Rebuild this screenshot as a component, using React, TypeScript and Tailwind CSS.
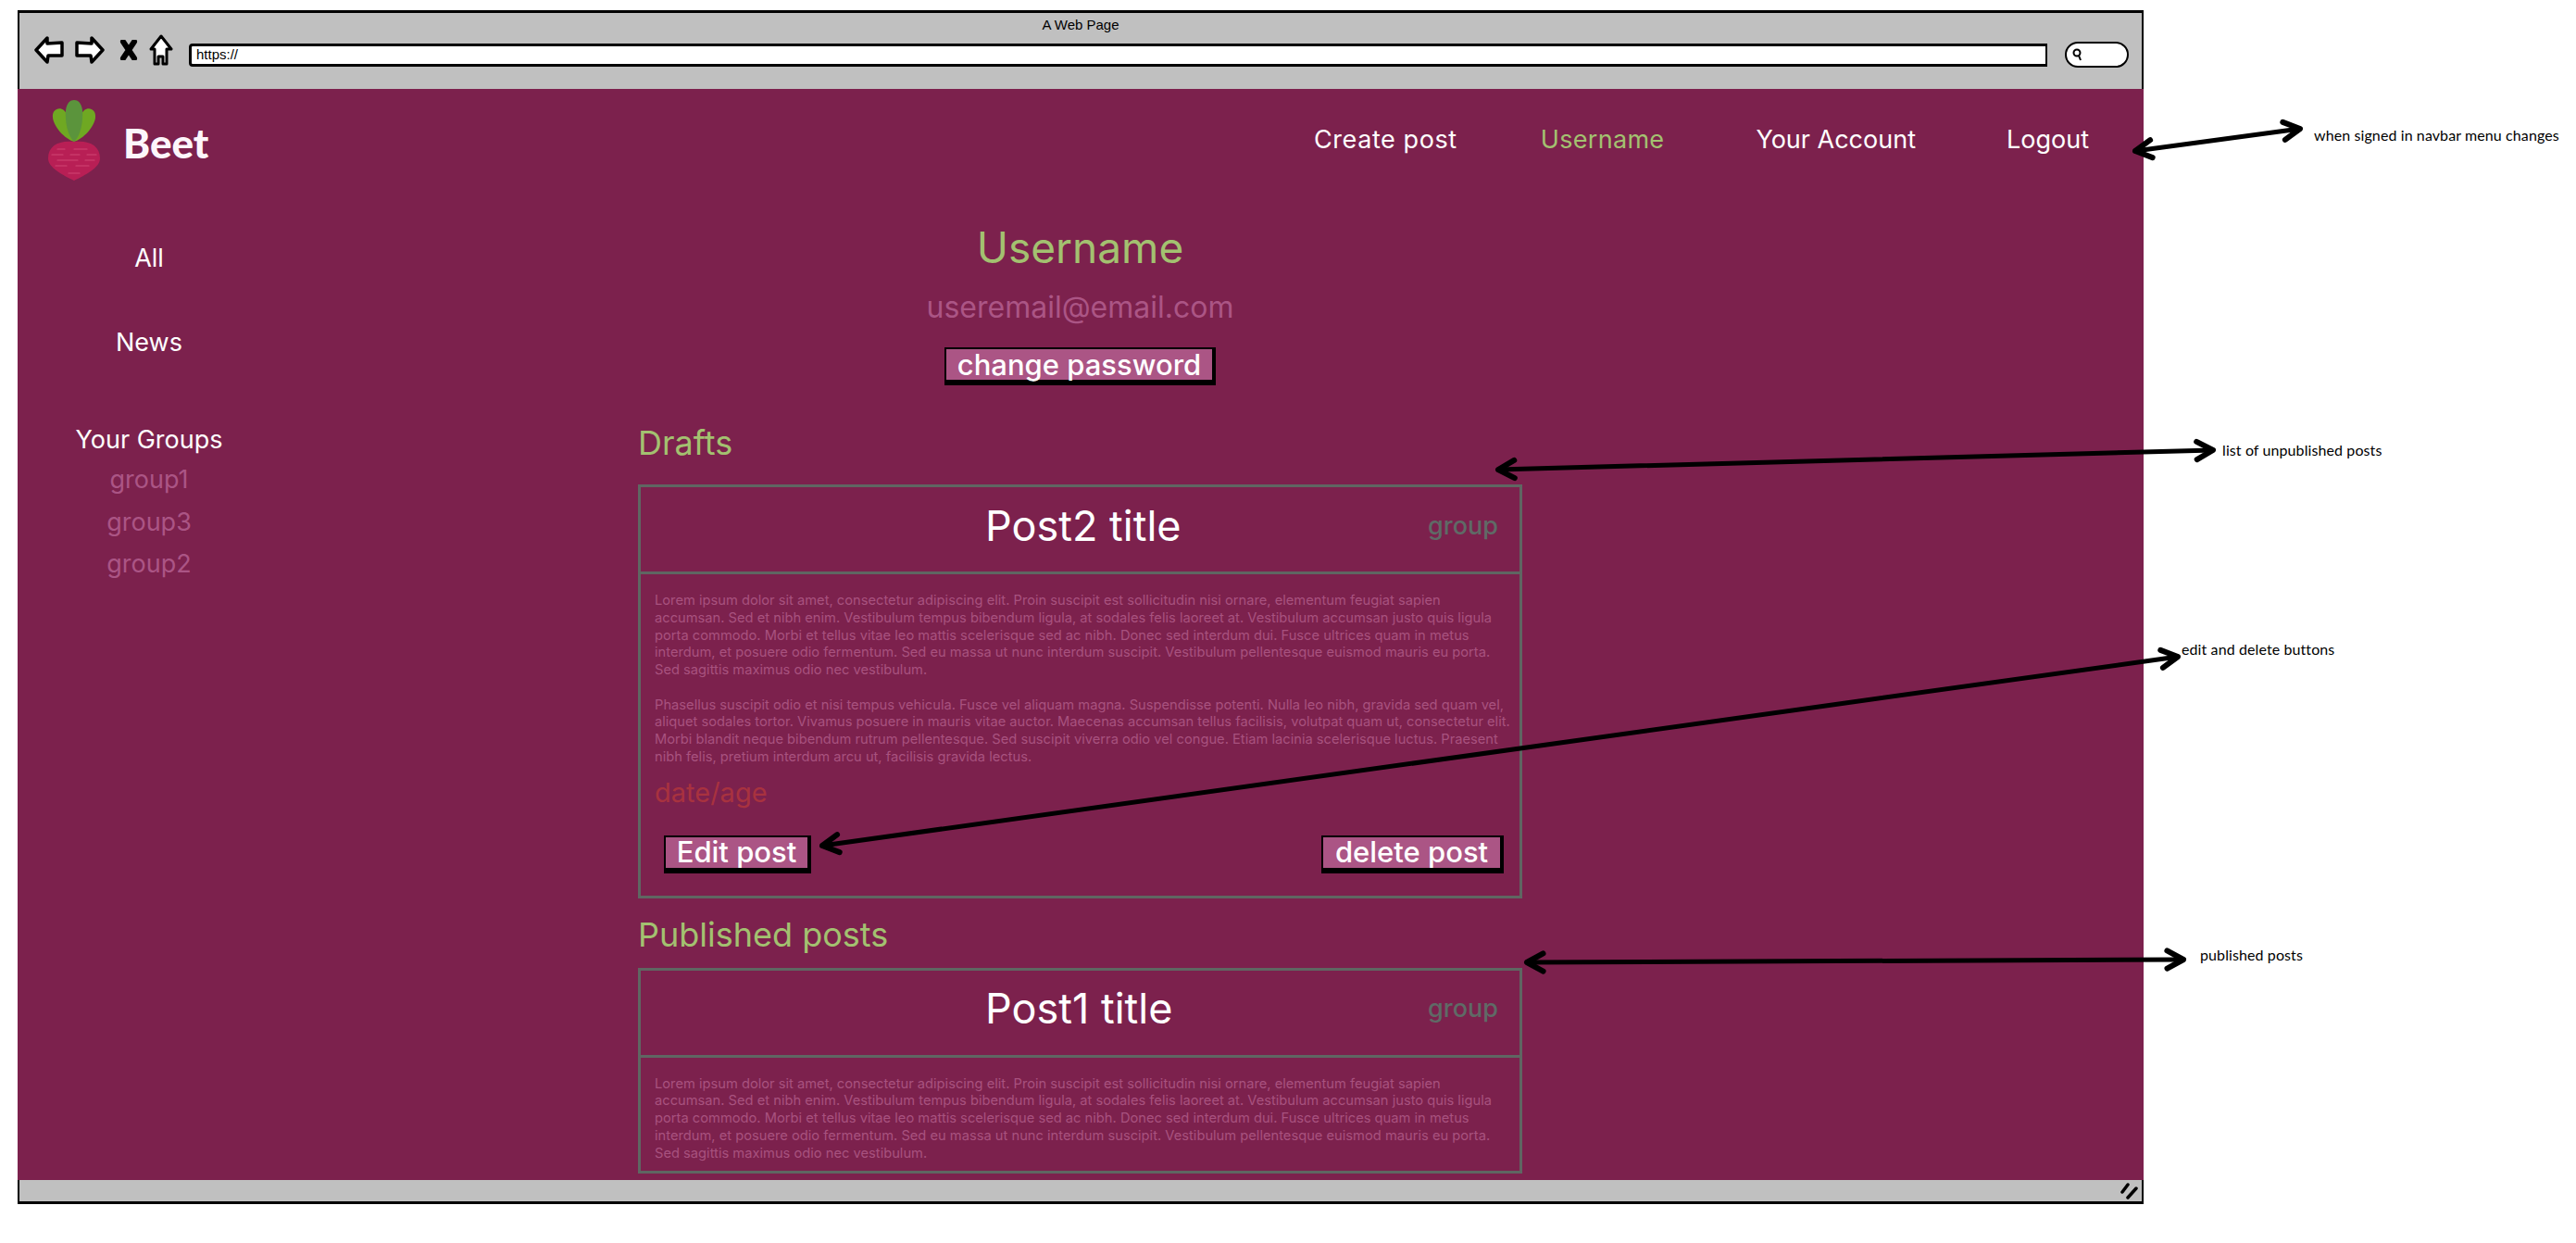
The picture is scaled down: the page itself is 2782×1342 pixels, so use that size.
const LINES_A = [
  "Lorem ipsum dolor sit amet, consectetur adipiscing elit. Proin suscipit est sollicitudin nisi ornare, elementum feugiat sapien",
  "accumsan. Sed et nibh enim. Vestibulum tempus bibendum ligula, at sodales felis laoreet at. Vestibulum accumsan justo quis ligula",
  "porta commodo. Morbi et tellus vitae leo mattis scelerisque sed ac nibh. Donec sed interdum dui. Fusce ultrices quam in metus",
  "interdum, et posuere odio fermentum. Sed eu massa ut nunc interdum suscipit. Vestibulum pellentesque euismod mauris eu porta.",
  "Sed sagittis maximus odio nec vestibulum.",
];
const LINES_B = [
  "Phasellus suscipit odio et nisi tempus vehicula. Fusce vel aliquam magna. Suspendisse potenti. Nulla leo nibh, gravida sed quam vel,",
  "aliquet sodales tortor. Vivamus posuere in mauris vitae auctor. Maecenas accumsan tellus facilisis, volutpat quam ut, consectetur elit.",
  "Morbi blandit neque bibendum rutrum pellentesque. Sed suscipit viverra odio vel congue. Etiam lacinia scelerisque luctus. Praesent",
  "nibh felis, pretium interdum arcu ut, facilisis gravida lectus.",
];

function Lines({ lines }: { lines: string[] }) {
  return (
    <p className="text-[14.7px] leading-[18.75px] text-[#a8527f] whitespace-nowrap">
      {lines.map((l) => (
        <span key={l} className="block">{l}</span>
      ))}
    </p>
  );
}

function SketchButton({ label, w }: { label: string; w: string }) {
  return (
    <button className={`${w} h-[41px] bg-[#ab5585] border-t-2 border-l-2 border-r-[4px] border-b-[6px] border-black text-white font-medium text-[31px] leading-[30px] flex items-center justify-center whitespace-nowrap`}>
      {label}
    </button>
  );
}

function CardHeader({ title }: { title: string }) {
  return (
    <div className="h-[94px] border-b-[3px] border-[#5f6662] flex items-center justify-between pl-[372px] pr-[23px] pb-[8px]">
      <span className="text-white text-[45px] leading-[56px]">{title}</span>
      <span className="text-[#5f6a66] font-medium text-[27px] leading-[36px]">group</span>
    </div>
  );
}

function Arrow({ x1, y1, x2, y2 }: { x1: number; y1: number; x2: number; y2: number }) {
  const a = Math.atan2(y1 - y2, x1 - x2);
  const head = (x: number, y: number, ang: number) => {
    const l = 20;
    const s = 0.5;
    return `M${x + l * Math.cos(ang + s)} ${y + l * Math.sin(ang + s)} L${x} ${y} L${x + l * Math.cos(ang - s)} ${y + l * Math.sin(ang - s)}`;
  };
  return (
    <g stroke="#000" fill="none" strokeLinecap="round" strokeLinejoin="round">
      <path d={`M${x1} ${y1} L${x2} ${y2}`} strokeWidth="5" />
      <path d={head(x1, y1, a + Math.PI)} strokeWidth="6" />
      <path d={head(x2, y2, a)} strokeWidth="6" />
    </g>
  );
}

function Note({ className, children }: { className: string; children: string }) {
  return (
    <span className={`absolute font-['Lato',sans-serif] text-black text-[16px] tracking-[0.1px] leading-[20px] whitespace-nowrap ${className}`}>{children}</span>
  );
}

function BeetLogo() {
  return (
    <svg width="60" height="88" viewBox="0 0 60 88" className="shrink-0">
      <path d="M30 46 C20 43 8 30 7 20 C6 11 14 8 19 12 C24 16 27 32 30 46Z" fill="#6fa822" />
      <path d="M30 46 C40 43 52 30 53 20 C54 11 46 8 41 12 C36 16 33 32 30 46Z" fill="#6fa822" />
      <path d="M30 46 C23 40 20 24 21 12 C22 4 26 1 30 1 C34 1 38 4 39 12 C40 24 37 40 30 46Z" fill="#5b943c" />
      <path d="M30 46 C46 44 58 50 58 64 C58 74 42 82 30 88 C18 82 2 74 2 64 C2 50 14 44 30 46Z" fill="#b81f55" />
      <g stroke="#cf4775" strokeWidth="1.2" strokeLinecap="round">
        <path d="M12 54 H20 M30 54 H44" />
        <path d="M6 60 H18 M26 60 H36 M44 60 H54" />
        <path d="M12 66 H34 M42 66 H52" />
        <path d="M10 72 H22 M32 72 H46" />
        <path d="M24 80 H36" />
      </g>
    </svg>
  );
}

function ChromeIcons() {
  return (
    <div className="flex items-center mb-[10px]">
      <svg width="32" height="30" viewBox="0 0 32 30">
        <path d="M2 15 L14 2 L14 8 L30 7 L30 21 L15 21 L14 28Z" fill="#fff" stroke="#000" strokeWidth="3.5" strokeLinejoin="round" />
      </svg>
      <svg width="32" height="30" viewBox="0 0 32 30" className="ml-[12px]">
        <path d="M30 15 L18 2 L18 8 L2 7 L2 21 L17 21 L18 28Z" fill="#fff" stroke="#000" strokeWidth="3.5" strokeLinejoin="round" />
      </svg>
      <svg width="20" height="22" viewBox="0 0 20 22" className="ml-[16px]">
        <path d="M4 2 L16 20 M16 2 L4 20" stroke="#000" strokeWidth="6" strokeLinecap="round" />
      </svg>
      <svg width="26" height="34" viewBox="0 0 26 34" className="ml-[12px]">
        <path d="M13 2 L24 16 L19 16 L19 32 L15 32 L15 24 L10 24 L10 32 L6 32 L6 16 L2 16Z" fill="#fff" stroke="#000" strokeWidth="3" strokeLinejoin="round" />
      </svg>
    </div>
  );
}

export default function App() {
  return (
    <div className="relative w-[2782px] h-[1342px] overflow-hidden bg-white font-['Inter',sans-serif]">
      <div className="w-[2296px] ml-[19px] pt-[11px]">
        {/* Browser chrome */}
        <div className="h-[85px] bg-[#c0c0c0] border-t-[3px] border-x-2 border-black">
          <div className="h-[26px] flex items-center justify-center font-['Liberation_Sans',sans-serif] text-[15px] text-black">A Web Page</div>
          <div className="h-[38px] flex items-center pl-[16px]">
            <ChromeIcons />
            <div className="ml-[17px] w-[2007px] h-[25px] bg-white border-y-[3px] border-l-[3px] border-r-2 border-black rounded-l-[4px] flex items-center pl-[5px] font-['Liberation_Sans',sans-serif] text-[15px] text-black">https://</div>
            <div className="ml-[19px] w-[69px] h-[28px] bg-white border-2 border-black rounded-[14px] flex items-center pl-[5px]">
              <svg width="12" height="14" viewBox="0 0 12 14">
                <circle cx="6" cy="5" r="3.5" fill="none" stroke="#000" strokeWidth="2" />
                <path d="M8 8 L10 13" stroke="#000" strokeWidth="2" />
              </svg>
            </div>
          </div>
        </div>

        {/* Page */}
        <div className="h-[1178px] bg-[#7c214d] overflow-hidden">
          <header className="h-[143px] flex justify-between">
            <div className="flex items-start pl-[31px] pt-[11px]">
              <BeetLogo />
              <span className="ml-[23px] mt-[19px] font-['Lato',sans-serif] font-black text-[#fdf6fb] text-[44px] leading-[56px]">Beet</span>
            </div>
            <nav className="flex text-[27px] leading-[36px] pt-[37px] text-white whitespace-nowrap">
              <a className="mr-[90px] tracking-[0.6px]">Create post</a>
              <a className="mr-[99px] tracking-[0.3px] text-[#a3c170]">Username</a>
              <a className="mr-[98px]">Your Account</a>
              <a className="mr-[59px]">Logout</a>
            </nav>
          </header>

          <div className="flex">
            <aside className="w-[284px] flex flex-col items-center pt-[22px] text-[27px] leading-[36px] text-white shrink-0">
              <a>All</a>
              <a className="mt-[55px]">News</a>
              <h3 className="mt-[69px]">Your Groups</h3>
              <a className="mt-[2px] leading-[45.5px] text-[#ab5585]">group1</a>
              <a className="leading-[45.5px] text-[#ab5585]">group3</a>
              <a className="leading-[45.5px] text-[#ab5585]">group2</a>
            </aside>

            <main className="ml-[386px] w-[955px]">
              <div className="flex flex-col items-center">
                <h1 className="text-[#a3c170] text-[46px] leading-[56px]">Username</h1>
                <p className="mt-[17px] text-[#ab5585] text-[32px] leading-[40px]">useremail@email.com</p>
                <div className="mt-[23px]">
                  <SketchButton label="change password" w="w-[293px]" />
                </div>
              </div>

              <h2 className="mt-[40px] text-[#a3c170] text-[36px] leading-[44px]">Drafts</h2>
              <section className="mt-[23px] border-[3px] border-[#5f6662]">
                <CardHeader title="Post2 title" />
                <div className="pl-[15px] pr-[15px] pt-[19px] pb-[24px]">
                  <Lines lines={LINES_A} />
                  <div className="h-[18.75px]" />
                  <Lines lines={LINES_B} />
                  <p className="mt-[9px] text-[#a8323f] text-[29px] leading-[40px]">date/age</p>
                  <div className="mt-[26px] pl-[10px] pr-[2px] flex justify-between">
                    <SketchButton label="Edit post" w="w-[159px]" />
                    <SketchButton label="delete post" w="w-[197px]" />
                  </div>
                </div>
              </section>

              <h2 className="mt-[17px] text-[#a3c170] text-[36px] leading-[44px]">Published posts</h2>
              <section className="mt-[14px] border-[3px] border-[#5f6662]">
                <CardHeader title="Post1 title" />
                <div className="pl-[15px] pr-[15px] pt-[19px] pb-[10px]">
                  <Lines lines={LINES_A} />
                </div>
              </section>
            </main>
          </div>
        </div>

        {/* Status bar */}
        <div className="h-[26px] bg-[#c0c0c0] border-b-[3px] border-x-2 border-black flex items-center justify-end pr-[3px]">
          <svg width="20" height="18" viewBox="0 0 20 18">
            <path d="M2 10 L8 2 M8 16 L17 6" stroke="#000" strokeWidth="3.5" strokeLinecap="round" />
          </svg>
        </div>
      </div>

      {/* Annotations */}
      <svg width="2782" height="1342" viewBox="0 0 2782 1342" className="absolute left-0 top-0 pointer-events-none">
        <Arrow x1={2306} y1={163} x2={2484} y2={139} />
        <Arrow x1={1618} y1={507} x2={2390} y2={486} />
        <Arrow x1={888} y1={913} x2={2352} y2={709} />
        <Arrow x1={1649} y1={1039} x2={2358} y2={1036} />
      </svg>
      <Note className="left-[2499px] top-[136px]">when signed in navbar menu changes</Note>
      <Note className="left-[2400px] top-[476px]">list of unpublished posts</Note>
      <Note className="left-[2356px] top-[691px]">edit and delete buttons</Note>
      <Note className="left-[2376px] top-[1021px]">published posts</Note>
    </div>
  );
}
